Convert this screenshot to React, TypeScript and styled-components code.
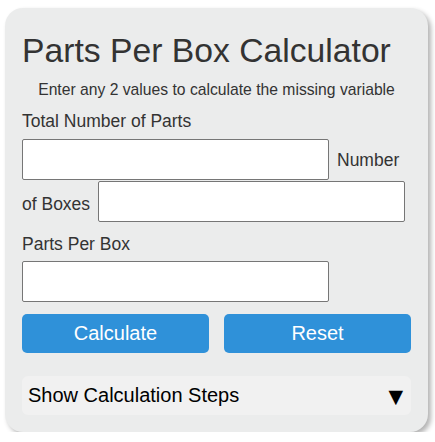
import React from "react";
import styled, { createGlobalStyle } from "styled-components";

const Global = createGlobalStyle`
  html, body { margin: 0; padding: 0; background: #ffffff; }
  body { font-family: "Liberation Sans", Arial, sans-serif; }
  * { box-sizing: border-box; }
`;

const Card = styled.div`
  width: 423px;
  margin: 8px 0 0 5px;
  padding: 23px 17px 17px;
  background: #ebecec;
  border-radius: 18px;
  box-shadow: 3px 3px 5px rgba(0, 0, 0, 0.3);
  color: #333333;
`;

const Title = styled.h1`
  margin: 0;
  font-size: 33.7px;
  line-height: 39px;
  font-weight: normal;
  color: #333333;
`;

const Subtitle = styled.p`
  margin: 11px 0 0;
  font-size: 15.7px;
  line-height: 17px;
  text-align: center;
  color: #333333;
`;

const Label = styled.label<{ $top: number; $bottom: number }>`
  display: block;
  margin: ${(p) => p.$top}px 0 ${(p) => p.$bottom}px;
  font-size: 17.5px;
  line-height: 20px;
  color: #333333;
`;

const Row = styled.div<{ $gap?: number; $space?: number }>`
  display: flex;
  align-items: center;
  gap: ${(p) => p.$space ?? 8}px;
  margin-bottom: ${(p) => p.$gap ?? 0}px;
`;

const InlineLabel = styled.label<{ $shift?: number }>`
  font-size: 17.5px;
  line-height: 20px;
  color: #333333;
  padding-top: ${(p) => p.$shift ?? 0}px;
`;

const Input = styled.input`
  display: block;
  width: 307px;
  height: 41px;
  margin: 0;
  padding: 0 8px;
  border: 1px solid #767676;
  border-radius: 2px;
  background: #ffffff;
  font-family: "Liberation Sans", Arial, sans-serif;
  font-size: 16px;
  outline: none;
`;

const Buttons = styled.div`
  display: flex;
  gap: 15px;
  margin-top: 12px;
`;

const Button = styled.button`
  flex: 1;
  height: 39px;
  border: none;
  border-radius: 5px;
  background: #2f91d9;
  color: #ffffff;
  font-family: "Liberation Sans", Arial, sans-serif;
  font-size: 20px;
  cursor: pointer;
`;

const Steps = styled.div`
  margin-top: 23px;
  height: 39px;
  display: flex;
  align-items: center;
  justify-content: space-between;
  padding: 0 8px 0 6px;
  background: #f1f1f1;
  border-radius: 6px;
  font-size: 20px;
  color: #000000;
`;

const Arrow = styled.span`
  font-size: 19px;
  font-family: "DejaVu Sans", sans-serif;
`;

export default function App() {
  return (
    <>
      <Global />
      <Card>
        <Title>Parts Per Box Calculator</Title>
        <Subtitle>Enter any 2 values to calculate the missing variable</Subtitle>
        <Label $top={13} $bottom={8}>Total Number of Parts</Label>
        <Row $gap={1}>
          <Input type="text" />
          <InlineLabel>Number</InlineLabel>
        </Row>
        <Row $space={8}>
          <InlineLabel $shift={5}>of Boxes</InlineLabel>
          <Input type="text" />
        </Row>
        <Label $top={12} $bottom={7}>Parts Per Box</Label>
        <Input type="text" />
        <Buttons>
          <Button>Calculate</Button>
          <Button>Reset</Button>
        </Buttons>
        <Steps>
          <span>Show Calculation Steps</span>
          <Arrow>▼</Arrow>
        </Steps>
      </Card>
    </>
  );
}
